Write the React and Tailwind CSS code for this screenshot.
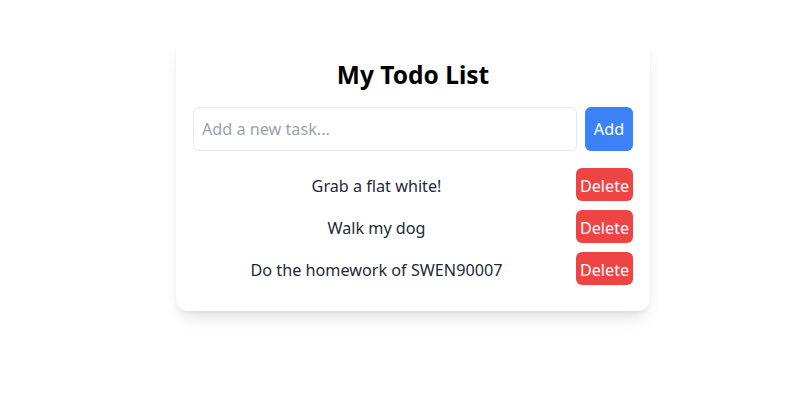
import React, { useState } from "react";

export default function App() {
  const [tasks] = useState([
    "Grab a flat white!",
    "Walk my dog",
    "Do the homework of SWEN90007",
  ]);
  return (
    <div
      className="min-h-[410px] bg-white flex justify-center pt-[37px] pl-[26px]"
      style={{ fontFamily: '"Noto Sans", "Open Sans", sans-serif' }}
    >
      <div className="w-[474px] h-[274px] bg-white rounded-xl shadow-lg px-[17px]">
        <h1 className="mt-[22px] h-[32px] leading-[32px] text-center text-[24.5px] font-bold text-black">
          My Todo List
        </h1>
        <div className="mt-[16px] flex gap-2 h-[44px]">
          <input
            className="flex-1 min-w-0 border border-[#e5e7eb] rounded-md px-2 text-[16.2px] text-gray-800 placeholder:text-[#9ca3af] outline-none"
            placeholder="Add a new task..."
          />
          <button className="w-[48px] bg-[#3b82f6] text-white rounded-md text-[16.2px]">
            Add
          </button>
        </div>
        <ul className="mt-[17px] flex flex-col gap-[9px]">
          {tasks.map((t) => (
            <li key={t} className="flex items-center h-[33px]">
              <span className="flex-1 text-center mr-4 pt-[3px] text-[16.2px] text-[#1f2937]">
                {t}
              </span>
              <button className="w-[57px] h-[33px] pt-[3px] bg-[#ef4444] text-white rounded-md text-[16.2px]">
                Delete
              </button>
            </li>
          ))}
        </ul>
      </div>
    </div>
  );
}
